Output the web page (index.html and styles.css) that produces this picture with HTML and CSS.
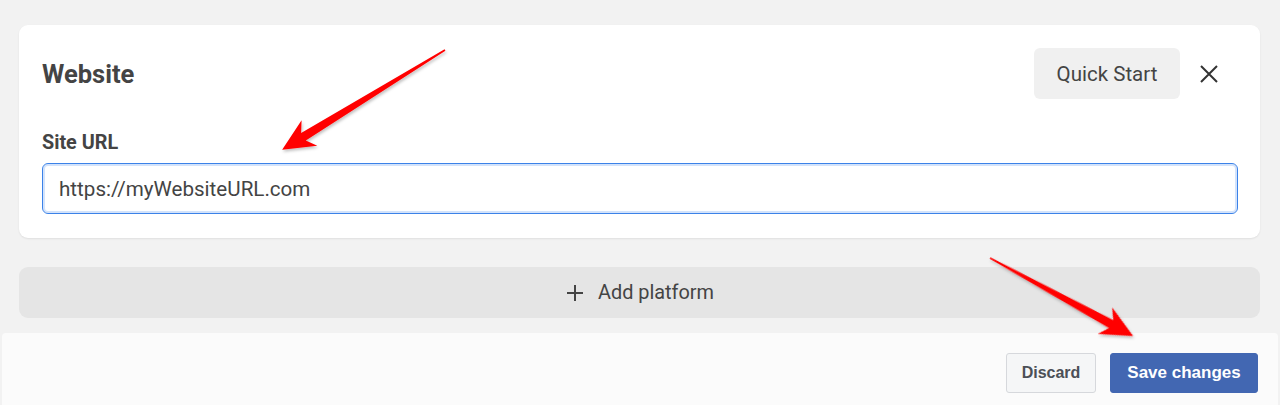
FILE: index.html
```html
<!DOCTYPE html>
<html>
<head>
<meta charset="utf-8">
<link rel="stylesheet" href="styles.css">
</head>
<body>
<div class="page">
  <main class="main">
    <section class="card">
      <div class="card-head">
        <h2 class="title">Website</h2>
        <div class="head-actions">
          <button class="quick">Quick Start</button>
          <button class="close" aria-label="Close">
            <svg width="18" height="18" viewBox="0 0 18 18"><path d="M1 1 L17 17 M17 1 L1 17" stroke="#333" stroke-width="2" fill="none"/></svg>
          </button>
        </div>
      </div>
      <label class="label">Site URL</label>
      <div class="input">https://myWebsiteURL.com</div>
    </section>
    <button class="add">
      <svg width="16" height="16" viewBox="0 0 16 16"><path d="M8 0 V16 M0 8 H16" stroke="#444" stroke-width="2" fill="none"/></svg>
      <span>Add platform</span>
    </button>
  </main>
  <footer class="footer">
    <button class="btn discard">Discard</button>
    <button class="btn save">Save changes</button>
  </footer>
  <svg class="arrows" width="1280" height="405" viewBox="0 0 1280 405">
    <defs>
      <filter id="sh" x="-10%" y="-10%" width="120%" height="120%">
        <feDropShadow dx="1" dy="2" stdDeviation="1.5" flood-color="#000" flood-opacity="0.25"/>
      </filter>
    </defs>
    <g filter="url(#sh)" fill="#ff0000">
      <g transform="translate(445,50) rotate(148.5)">
        <polygon points="0,-0.8 166,-4.5 159,-15 191,0 159,15 166,4.5 0,0.8"/>
      </g>
      <g transform="translate(990,258) rotate(28.6)">
        <polygon points="0,-0.8 138,-4.5 131,-15 163,0 131,15 138,4.5 0,0.8"/>
      </g>
    </g>
  </svg>
</div>
</body>
</html>
```
FILE: styles.css
```css
* { box-sizing: border-box; }
html, body { margin: 0; padding: 0; }
body {
  background: #f2f2f2;
  font-family: Roboto, "Liberation Sans", Arial, sans-serif;
  color: #444;
  width: 1280px;
  height: 405px;
  overflow: hidden;
}
.page { position: relative; width: 1280px; height: 405px; }
.main { padding: 25px 20px 0 19px; }
.card {
  background: #fff;
  border-radius: 9px;
  box-shadow: 0 1px 2px rgba(0,0,0,0.08);
  padding: 23px 22px 24px 23px;
}
.card-head {
  display: flex;
  align-items: center;
  justify-content: space-between;
  height: 51px;
}
.title {
  margin: 0;
  font-size: 25.5px;
  font-weight: 700;
  color: #444;
}
.head-actions { display: flex; align-items: center; gap: 10px; padding-right: 10px; }
.quick {
  height: 51px;
  width: 146px;
  border: none;
  border-radius: 6px;
  background: #f0f0f0;
  font-family: Roboto, sans-serif;
  font-size: 20.5px;
  color: #444;
  padding: 0;
}
.close {
  width: 38px;
  height: 38px;
  border: none;
  background: transparent;
  display: flex;
  align-items: center;
  justify-content: center;
  padding: 0;
}
.label {
  display: block;
  margin-top: 34px;
  font-size: 19.8px;
  font-weight: 700;
  line-height: 20px;
  color: #444;
}
.input {
  margin-top: 10px;
  height: 51px;
  border: 1px solid #3b82e8;
  border-radius: 6px;
  box-shadow: inset 0 0 0 2px #d3e3fb;
  padding: 0 16px;
  display: flex;
  align-items: center;
  font-size: 20.6px;
  color: #444;
  background: #fff;
}
.add {
  margin-top: 29px;
  width: 100%;
  height: 51px;
  border: none;
  border-radius: 9px;
  background: #e5e5e5;
  display: flex;
  align-items: center;
  justify-content: center;
  gap: 15px;
  font-family: Roboto, sans-serif;
  font-size: 19.9px;
  color: #444;
  padding: 0 0 0 2px;
}
.footer {
  margin: 15px 2px 0 2px;
  height: 80px;
  background: #fbfbfb;
  border-radius: 4px 4px 0 0;
  display: flex;
  justify-content: flex-end;
  align-items: flex-start;
  gap: 14px;
  padding: 20px 20px 0 0;
}
.btn {
  height: 40px;
  border-radius: 3px;
  font-family: "Liberation Sans", Arial, sans-serif;
  font-weight: 700;
  font-size: 16px;
  padding: 0;
}
.discard {
  width: 90px;
  background: #f5f6f7;
  border: 1px solid #d6d8dc;
  color: #4b4f56;
}
.save {
  width: 148px;
  font-size: 17px;
  background: #4267b2;
  border: 1px solid #4267b2;
  color: #fff;
}
.arrows { position: absolute; left: 0; top: 0; pointer-events: none; }
```
